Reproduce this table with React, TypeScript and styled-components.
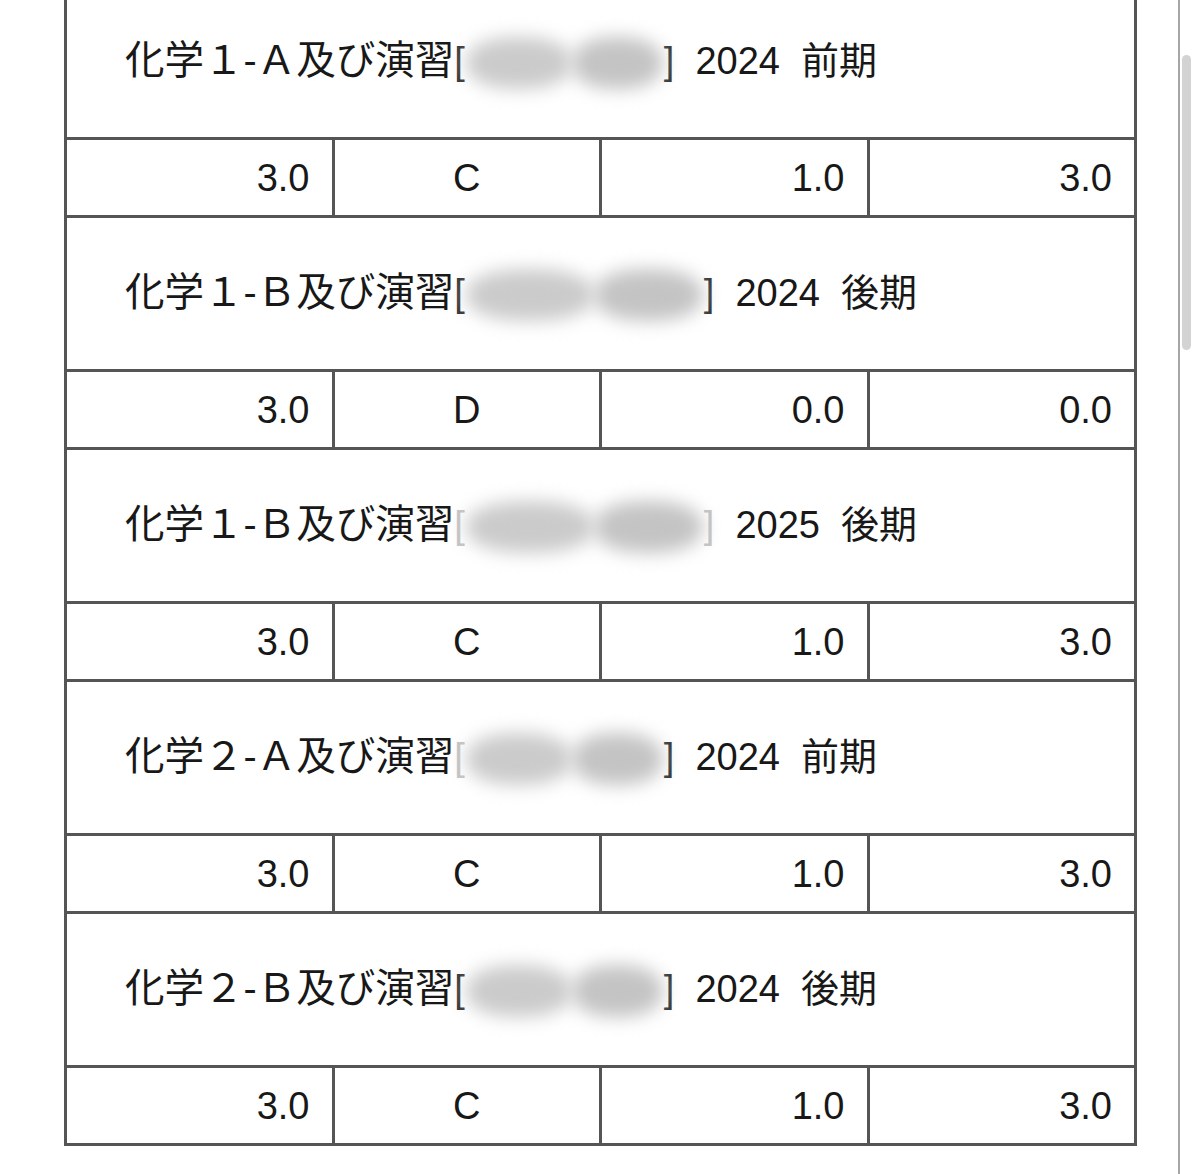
import React from "react";
import styled, { createGlobalStyle } from "styled-components";

const Global = createGlobalStyle`
  html, body { margin: 0; padding: 0; background: #fff; }
  body { overflow: hidden; }
`;

const Page = styled.div`
  display: flex;
  width: 1200px;
  height: 1174px;
  overflow: hidden;
  background: #fff;
  font-family: "Liberation Sans", "Noto Sans CJK JP", sans-serif;
  color: #181818;
`;

const Main = styled.div`
  width: 1178px;
  padding-left: 64px;
  box-sizing: border-box;
`;

const Table = styled.table`
  width: 1073px;
  margin-top: -17px;
  border-collapse: collapse;
  table-layout: fixed;
  border: 3px solid #555;
`;

const TitleCell = styled.td`
  height: 151px;
  padding: 0 0 0 58px;
  border: 3px solid #555;
  font-size: 38px;
  line-height: 44px;
  white-space: pre;
  vertical-align: middle;
  text-align: left;
`;

const Name = styled.span`
  font-size: 39.5px;
`;

const DataCell = styled.td<{ $align: "right" | "center" }>`
  height: 75px;
  padding: 0 ${(p) => (p.$align === "right" ? "22px" : "0")} 0 0;
  border: 3px solid #555;
  font-size: 38px;
  line-height: 44px;
  vertical-align: middle;
  text-align: ${(p) => p.$align};
`;

const Bracket = styled.span<{ $faint?: boolean }>`
  color: ${(p) => (p.$faint ? "#c4c4c4" : "#333")};
  font-weight: 300;
`;

const Redaction = styled.span<{ $w: number }>`
  display: inline-flex;
  align-items: center;
  width: ${(p) => p.$w}px;
  height: 44px;
  vertical-align: middle;
  margin: 0 1px;
`;

const Blob = styled.span<{ $grow: number; $tone: string }>`
  flex: ${(p) => p.$grow} 1 0;
  height: 52px;
  border-radius: 45%;
  background: ${(p) => p.$tone};
  filter: blur(9px);
`;

const Track = styled.div`
  width: 20px;
  border-left: 2px solid #a6a6a6;
  padding: 55px 0 0 2px;
  box-sizing: border-box;
`;

const Thumb = styled.div`
  width: 9px;
  height: 295px;
  border-radius: 5px;
  background: #d3d3d3;
`;

type Course = {
  name: string;
  red: number;
  left: boolean;
  right: boolean;
  year: string;
  term: string;
  vals: [string, string, string, string];
};

const courses: Course[] = [
  { name: "化学１-Ａ及び演習", red: 197, left: true, right: true, year: "2024", term: "前期", vals: ["3.0", "C", "1.0", "3.0"] },
  { name: "化学１-Ｂ及び演習", red: 237, left: true, right: true, year: "2024", term: "後期", vals: ["3.0", "D", "0.0", "0.0"] },
  { name: "化学１-Ｂ及び演習", red: 237, left: false, right: false, year: "2025", term: "後期", vals: ["3.0", "C", "1.0", "3.0"] },
  { name: "化学２-Ａ及び演習", red: 197, left: false, right: true, year: "2024", term: "前期", vals: ["3.0", "C", "1.0", "3.0"] },
  { name: "化学２-Ｂ及び演習", red: 197, left: true, right: true, year: "2024", term: "後期", vals: ["3.0", "C", "1.0", "3.0"] },
];

export default function App() {
  return (
    <Page>
      <Global />
      <Main>
        <Table>
          <tbody>
            {courses.map((c, i) => (
              <React.Fragment key={i}>
                <tr>
                  <TitleCell colSpan={4}>
                    <Name>{c.name}</Name>
                    <Bracket $faint={!c.left}>[</Bracket>
                    <Redaction $w={c.red}>
                      <Blob $grow={1} $tone="#cbcbcb" />
                      <Blob $grow={0.85} $tone="#c4c4c4" />
                    </Redaction>
                    <Bracket $faint={!c.right}>]</Bracket>
                    {"  " + c.year + "  " + c.term}
                  </TitleCell>
                </tr>
                <tr>
                  <DataCell $align="right">{c.vals[0]}</DataCell>
                  <DataCell $align="center">{c.vals[1]}</DataCell>
                  <DataCell $align="right">{c.vals[2]}</DataCell>
                  <DataCell $align="right">{c.vals[3]}</DataCell>
                </tr>
              </React.Fragment>
            ))}
          </tbody>
        </Table>
      </Main>
      <Track>
        <Thumb />
      </Track>
    </Page>
  );
}
